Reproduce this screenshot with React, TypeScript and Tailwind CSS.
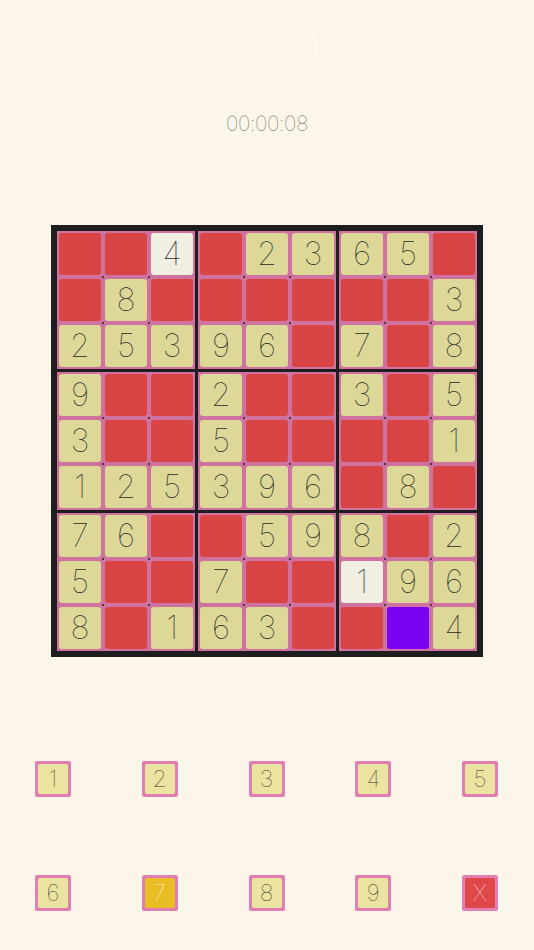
import React from 'react';

type Cell = { v?: number; c: 'r' | 'y' | 'w' | 'p' };

// grid rows, "." = red, "p" = purple, "w4" style = white with digit
const ROWS = [
  '. . w4 . 2 3 6 5 .',
  '. 8 . . . . . . 3',
  '2 5 3 9 6 . 7 . 8',
  '9 . . 2 . . 3 . 5',
  '3 . . 5 . . . . 1',
  '1 2 5 3 9 6 . 8 .',
  '7 6 . . 5 9 8 . 2',
  '5 . . 7 . . w1 9 6',
  '8 . 1 6 3 . . p 4',
];

const grid: Cell[][] = ROWS.map((r) =>
  r.split(' ').map((t) => {
    if (t === '.') return { c: 'r' };
    if (t === 'p') return { c: 'p' };
    if (t.startsWith('w')) return { c: 'w', v: Number(t.slice(1)) };
    return { c: 'y', v: Number(t) };
  })
);

const cellBg = {
  r: 'bg-[#d94444]',
  y: 'bg-[#ddd898]',
  w: 'bg-[#f1eee2]',
  p: 'bg-[#7b02f3]',
};

const font = { fontFamily: 'Inter, "Liberation Sans", sans-serif' };

const Box = ({ br, bc }: { br: number; bc: number }) => {
  const cells: Cell[] = [];
  for (let r = 0; r < 3; r++) for (let c = 0; c < 3; c++) cells.push(grid[br * 3 + r][bc * 3 + c]);
  return (
    <div className="relative w-[138px] h-[138px] bg-[#cf72a0] p-[2px] grid grid-cols-3 gap-[4px]">
      {cells.map((cell, i) => (
        <div
          key={i}
          className={`w-[42px] h-[42px] rounded-[3px] flex items-center justify-center text-[32px] font-thin text-[#2a2a26] ${cellBg[cell.c]}`}
        >
          {cell.v ?? ''}
        </div>
      ))}
      {/* little corner dots */}
      <div className="absolute left-[44.5px] top-[44.5px] w-[2px] h-[2px] rounded-full bg-[#222]" />
      <div className="absolute left-[90.5px] top-[44.5px] w-[2px] h-[2px] rounded-full bg-[#222]" />
      <div className="absolute left-[44.5px] top-[90.5px] w-[2px] h-[2px] rounded-full bg-[#222]" />
      <div className="absolute left-[90.5px] top-[90.5px] w-[2px] h-[2px] rounded-full bg-[#222]" />
    </div>
  );
};

const PadButton = ({ label, variant = 'y' }: { label: string; variant?: 'y' | 'gold' | 'x' }) => {
  const bg =
    variant === 'gold'
      ? 'bg-[#e9bd24] text-[#fbf0c0]'
      : variant === 'x'
      ? 'bg-[#e04848] text-[#f8c4d2]'
      : 'bg-[#ebe3a0] text-[#35342e]';
  return (
    <div className="w-[36px] h-[36px] rounded-[2px] bg-[#e17fb2] p-[3px]">
      <div className={`w-full h-full rounded-[2px] flex items-center justify-center text-[23px] font-thin ${bg}`}>
        {label}
      </div>
    </div>
  );
};

export default function App() {
  return (
    <div className="w-[534px] h-[950px] bg-[#fbf5ea] flex flex-col items-center overflow-hidden" style={font}>
      {/* faint header box */}
      <div className="mt-[33px] w-[103px] h-[29px] bg-[#fdf7ed] rounded-[2px]" />

      {/* Timer */}
      <div className="mt-[50px] text-[21px] leading-[24px] font-thin text-[#5f5d58] tracking-[-0.5px]">
        00:00:08
      </div>

      {/* Board */}
      <div className="mt-[89px] w-[432px] h-[432px] bg-[#1e1e1e] p-[6px] grid grid-cols-3 gap-[3px]">
        {[0, 1, 2].map((br) => [0, 1, 2].map((bc) => <Box key={`${br}-${bc}`} br={br} bc={bc} />))}
      </div>

      {/* Number pad */}
      <div className="mt-[104px] w-full pl-[35px] pr-[36px] flex justify-between">
        {['1', '2', '3', '4', '5'].map((n) => (
          <PadButton key={n} label={n} />
        ))}
      </div>
      <div className="mt-[78px] w-full pl-[35px] pr-[36px] flex justify-between">
        <PadButton label="6" />
        <PadButton label="7" variant="gold" />
        <PadButton label="8" />
        <PadButton label="9" />
        <PadButton label="X" variant="x" />
      </div>
    </div>
  );
}
